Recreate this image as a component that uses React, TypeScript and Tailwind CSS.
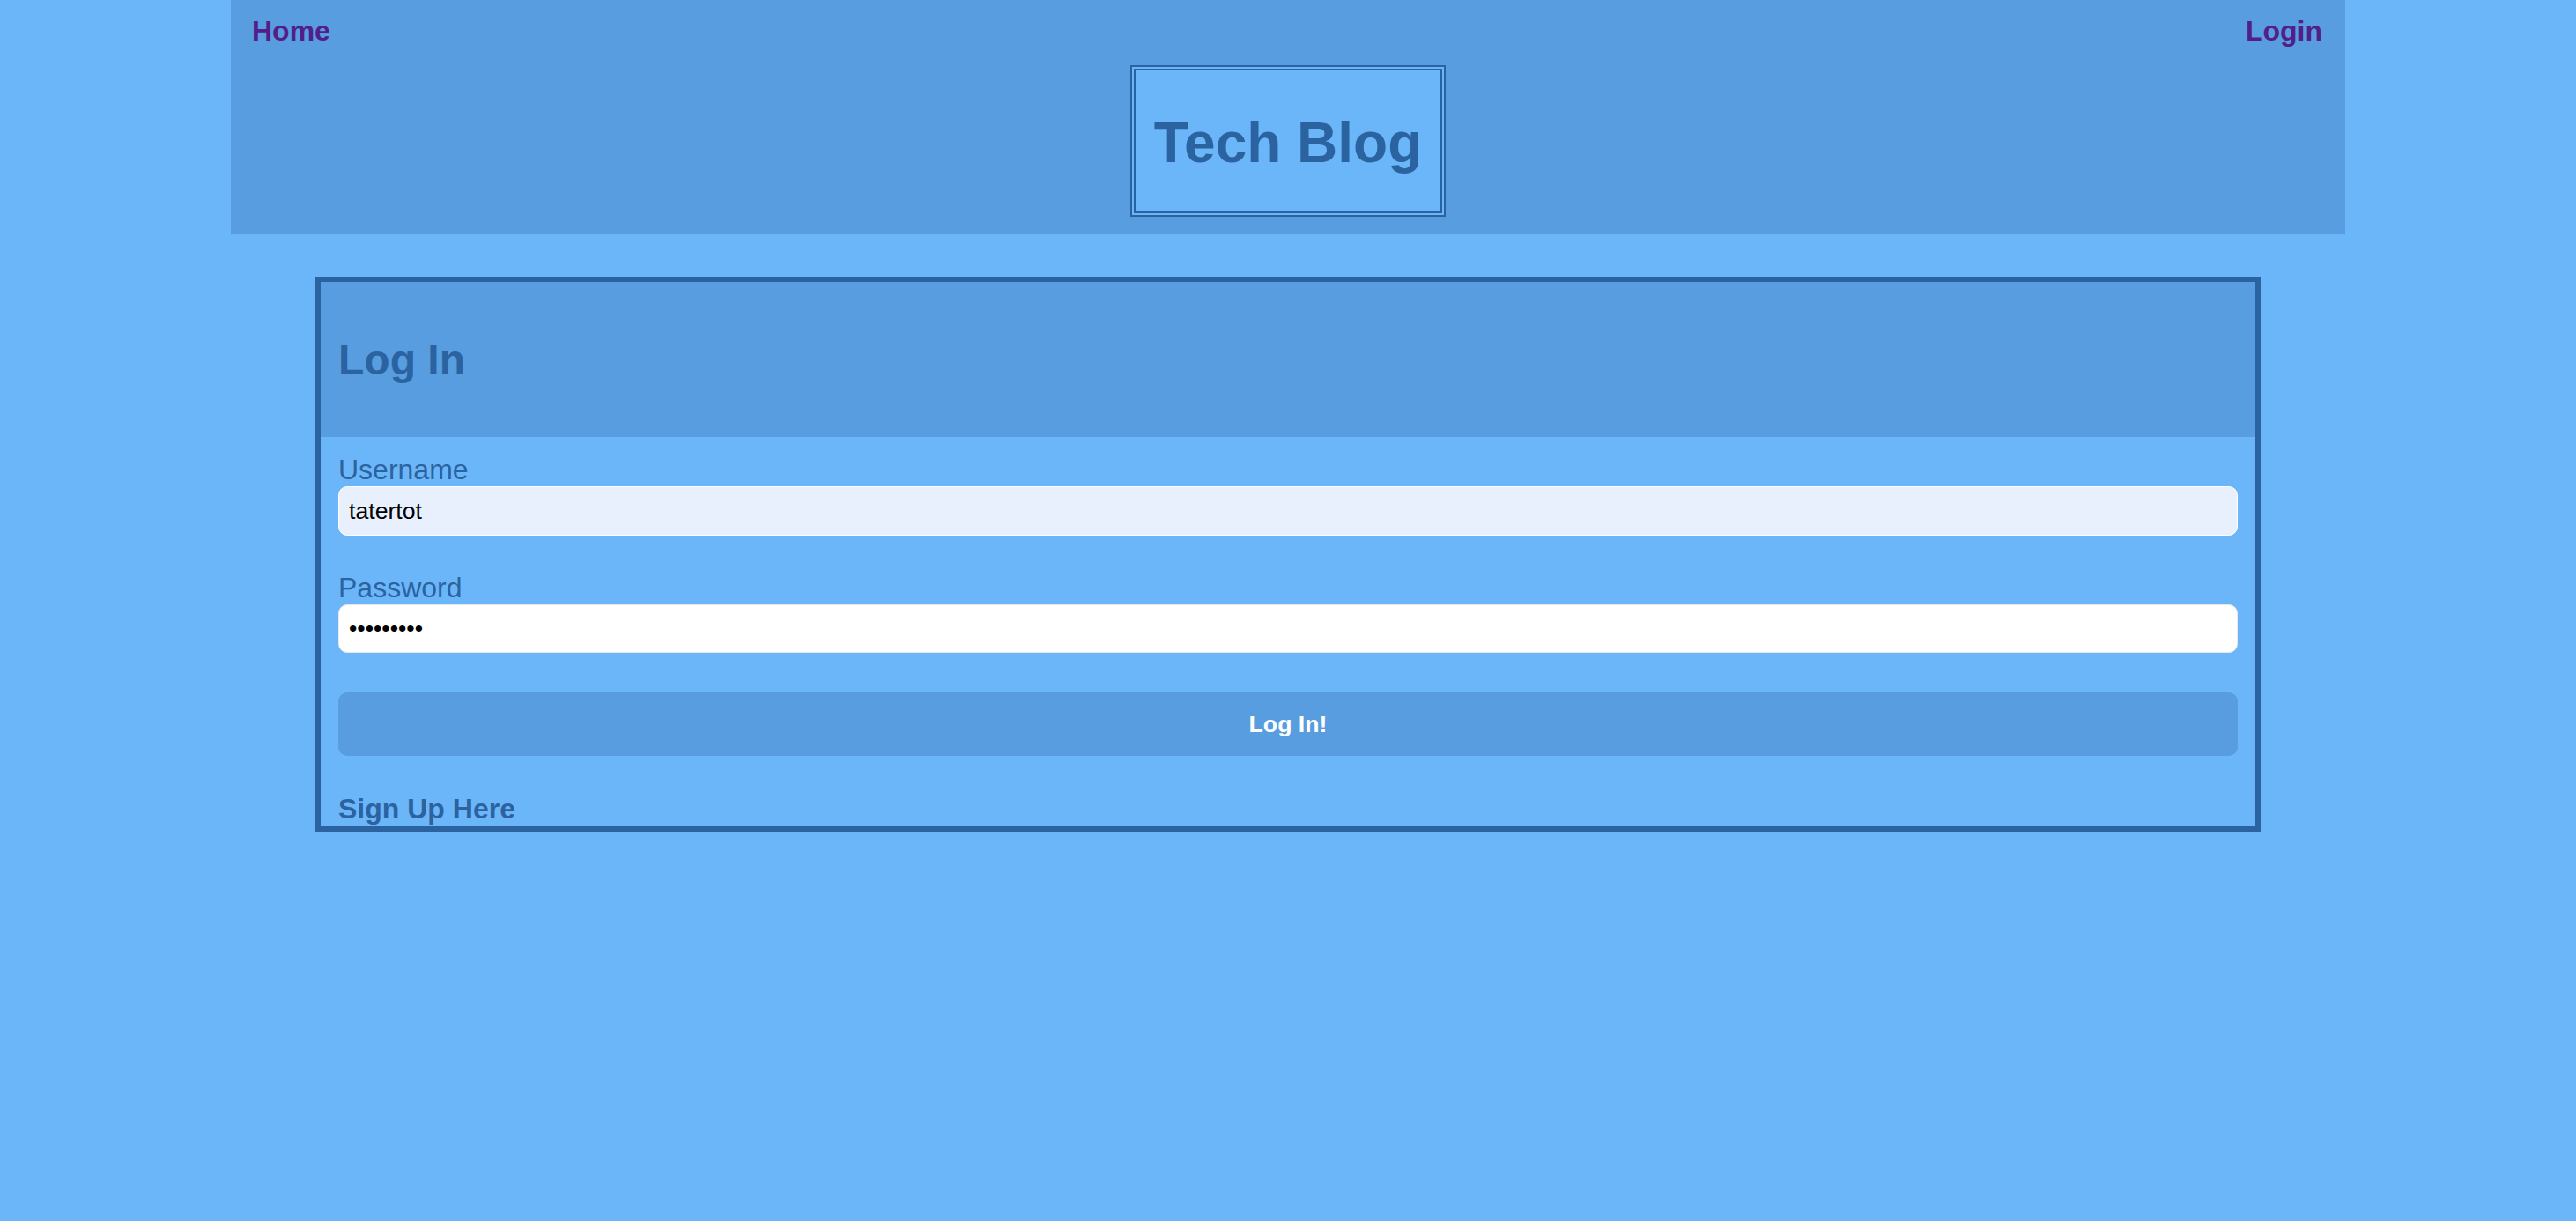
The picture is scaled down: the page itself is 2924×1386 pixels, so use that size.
import React from "react";

export default function App() {
  return (
    <div
      className="min-h-[1386px] w-full bg-[#6bb6f8]"
      style={{ fontFamily: '"Liberation Sans", Arial, Helvetica, sans-serif' }}
    >
      <div className="mx-auto w-[2400px]">
        <header className="h-[266px] bg-[#579ddf] flex flex-col">
          <nav className="flex justify-between px-[24px] pt-[17px] h-[74px]">
            <a className="text-[32px] leading-[37px] font-bold text-[#521e89]" href="#">
              Home
            </a>
            <a className="text-[32px] leading-[37px] font-bold text-[#521e89] pr-[2px]" href="#">
              Login
            </a>
          </nav>
          <div className="flex justify-center">
            <div className="w-[358px] h-[172px] border-[6px] border-double border-[#2b63a1] bg-[#6bb6f8] flex items-center justify-center pt-[3px]">
              <h1 className="text-[64px] leading-[74px] font-bold text-[#2b63a1]">Tech Blog</h1>
            </div>
          </div>
        </header>

        <div className="mx-[96px] mt-[48px] border-[6px] border-[#2b63a1] bg-[#6bb6f8]">
          <div className="h-[176px] bg-[#579ddf] flex items-center px-[20px]">
            <h2 className="text-[48px] leading-[55px] font-bold text-[#2b63a1]">Log In</h2>
          </div>
          <form className="px-[20px] pt-[19px] pb-[1px] flex flex-col" onSubmit={(e) => e.preventDefault()}>
            <label className="block text-[32px] leading-[37px] text-[#2b63a1]">Username</label>
            <input
              type="text"
              defaultValue="tatertot"
              className="h-[56px] w-full rounded-[10px] border border-white bg-[#e8f0fe] px-[11px] text-[26.67px] text-black outline-none"
              style={{ fontFamily: '"Liberation Sans", Arial, sans-serif' }}
            />
            <label className="block mt-[41px] text-[32px] leading-[37px] text-[#2b63a1]">Password</label>
            <input
              type="password"
              defaultValue="password1"
              className="h-[55px] w-full rounded-[10px] border border-[#e8e8e8] bg-white px-[11px] text-[26.67px] text-black outline-none"
              style={{ fontFamily: '"Liberation Sans", Arial, sans-serif' }}
            />
            <button
              type="submit"
              className="mt-[45px] h-[72px] w-full rounded-[10px] bg-[#579ddf] text-[26.67px] font-bold text-white"
            >
              Log In!
            </button>
            <a href="#" className="mt-[42px] block text-[32px] leading-[37px] font-bold text-[#2b63a1]">
              Sign Up Here
            </a>
          </form>
        </div>
      </div>
    </div>
  );
}
